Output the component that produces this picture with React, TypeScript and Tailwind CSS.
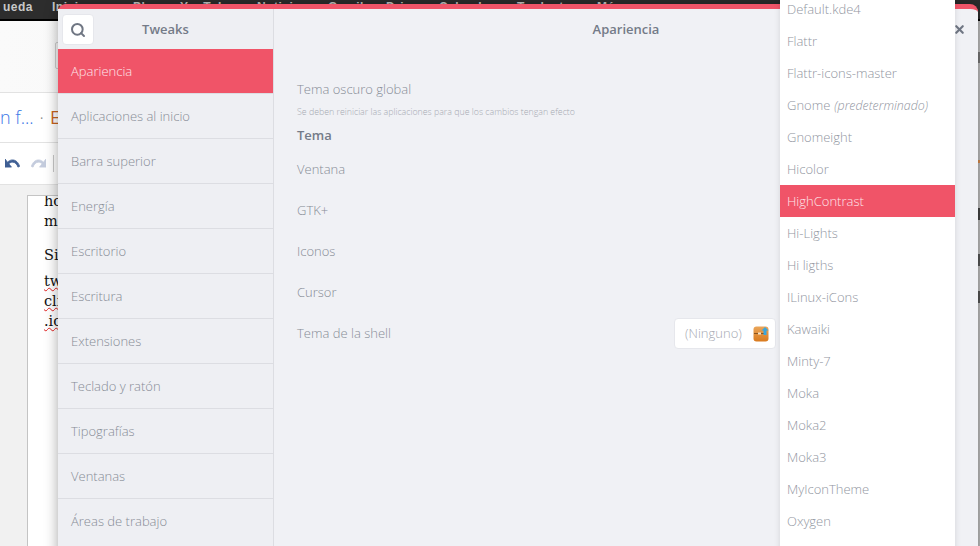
import React from 'react';
import { Search, X } from 'lucide-react';

const sections = [
  'Aplicaciones al inicio',
  'Barra superior',
  'Energía',
  'Escritorio',
  'Escritura',
  'Extensiones',
  'Teclado y ratón',
  'Tipografías',
  'Ventanas',
  'Áreas de trabajo',
];

const topMenu = [
  ['ueda', 3],
  ['Inicio', 52],
  ['Play', 133],
  ['YouTube', 180],
  ['Noticias', 257],
  ['Gmail', 328],
  ['Drive', 386],
  ['Calendar', 439],
  ['Traductor', 517],
  ['Más', 597],
] as const;

const themes = [
  'Default.kde4',
  'Flattr',
  'Flattr-icons-master',
  'Gnome',
  'Gnomeight',
  'Hicolor',
  'HighContrast',
  'Hi-Lights',
  'Hi ligths',
  'ILinux-iCons',
  'Kawaiki',
  'Minty-7',
  'Moka',
  'Moka2',
  'Moka3',
  'MyIconTheme',
  'Oxygen',
];

const rows = ['Ventana', 'GTK+', 'Iconos', 'Cursor'];

const undoPath =
  'M12.5 8c-2.65 0-5.05.99-6.9 2.6L2 7v9h9l-3.62-3.62c1.39-1.16 3.16-1.88 5.12-1.88 3.54 0 6.55 2.31 7.6 5.5l2.37-.78C21.08 11.03 17.15 8 12.5 8z';

function BackgroundPage() {
  return (
    <div className="absolute inset-0 bg-white flex flex-col">
      <div className="h-[21px] shrink-0 bg-[#2d2d2d] border-b-2 border-b-black relative overflow-hidden font-['Liberation_Sans',sans-serif] font-bold text-[12px] tracking-[0.5px] text-[#c8c8c8]">
        {topMenu.map(([t, x]) => (
          <span key={t} className="absolute top-[-2px]" style={{ left: x }}>{t}</span>
        ))}
      </div>
      <div className="h-[72px] shrink-0 bg-gradient-to-r from-[#fafafa] to-[#efefef] border-b border-[#e2e2e2] relative">
        <div className="absolute left-[55px] top-[21px] w-[10px] h-[27px] border border-[#cfcfcf] rounded-[2px]" />
      </div>
      <div className="h-[50px] shrink-0 border-b border-[#e2e2e2] flex items-center font-['Open_Sans',sans-serif] text-[18px] font-light">
        <span className="text-[#3b78e7]">n f...</span>
        <span className="text-[#888] mx-[6px]">·</span>
        <span className="text-[#c8641e] font-normal">E</span>
      </div>
      <div className="h-[42px] shrink-0 flex items-center pl-[5px] border-b border-[#e2e2e2]">
        <svg width="15" height="9" viewBox="2 7 21 10" preserveAspectRatio="none" className="text-[#3f5f94]">
          <path d={undoPath} fill="currentColor" stroke="currentColor" strokeWidth="1" />
        </svg>
        <svg width="15" height="9" viewBox="2 7 21 10" preserveAspectRatio="none" className="text-[#c4ccdd] ml-[11px] -scale-x-100">
          <path d={undoPath} fill="currentColor" stroke="currentColor" strokeWidth="1" />
        </svg>
        <div className="w-px h-[17px] bg-[#c8c8c8] ml-[7px]" />
      </div>
      <div className="flex-1 bg-[#f1f1f1] pl-[27px] pt-[10px] relative">
        <div className="h-[360px] w-[300px] bg-white border border-[#c4c4c4] pl-[16px] overflow-hidden font-['DejaVu_Serif',serif] text-[14.5px] text-[#111] leading-[20px]">
          <p className="-mt-[5px]">ho</p>
          <p>m</p>
          <p className="mt-[14px]">Si</p>
          <p className="mt-[6px] underline decoration-wavy decoration-[#e02020] decoration-1">tw</p>
          <p className="underline decoration-wavy decoration-[#e02020] decoration-1">cli</p>
          <p className="underline decoration-wavy decoration-[#e02020] decoration-1">.ic</p>
        </div>
      </div>
      <div className="absolute left-[978px] top-[21px] bottom-0 w-[2px] bg-[#bdbdbd]">
        <div className="absolute top-[31px] h-[11px] w-full bg-[#777]" />
        <div className="absolute top-[139px] h-[3px] w-full bg-[#d98a4a]" />
        <div className="absolute top-[187px] h-[12px] w-full bg-[#444]" />
        <div className="absolute top-[233px] h-[12px] w-full bg-[#555]" />
        <div className="absolute top-[270px] h-[12px] w-full bg-[#555]" />
      </div>
    </div>
  );
}

function Sidebar() {
  return (
    <aside className="w-[216px] shrink-0 bg-[#eeeff3] border-r border-[#dcdde2] flex flex-col">
      <header className="h-[40px] shrink-0 relative flex items-center justify-center pt-[1px]">
        <button className="absolute left-[4px] top-[5px] w-[32px] h-[31px] bg-white rounded-[4px] border border-[#e6e7ec] flex items-center justify-center text-[#6f7683]">
          <Search size={16} strokeWidth={3} />
        </button>
        <span className="text-[13px] font-semibold text-[#747b88]">Tweaks</span>
      </header>
      <div className="h-[44px] shrink-0 flex items-center pl-[13px] pt-[2px] bg-[#f05468] text-[13px] text-[#fde6ea] font-light">Apariencia</div>
      {sections.map((s) => (
        <div key={s} className="h-[45px] shrink-0 flex items-center pl-[13px] pt-[2px] border-t border-[#dcdde2] text-[13px] text-[#878c96] font-light">
          {s}
        </div>
      ))}
    </aside>
  );
}

function ThemeDropdown() {
  return (
    <div className="absolute left-[722px] top-[-16px] w-[175px] h-[570px] bg-white shadow-[0_0_6px_rgba(0,0,0,0.12)] text-[13px] text-[#92969f] font-light">
      {themes.map((t) => (
        <div
          key={t}
          className={`h-[32px] flex items-center pl-[7px] pt-[2px] ${t === 'HighContrast' ? 'bg-[#f05468] text-[#fde6ea]' : ''}`}
        >
          {t}
          {t === 'Gnome' && <em className="ml-[4px] text-[12.4px]">(predeterminado)</em>}
        </div>
      ))}
    </div>
  );
}

export default function App() {
  return (
    <div className="relative w-[980px] h-[546px] overflow-hidden font-['Open_Sans',sans-serif]">
      <BackgroundPage />

      {/* ventana de Tweaks */}
      <div className="absolute left-[58px] top-[4px] w-[920px] h-[560px] bg-[#f0f1f5] rounded-t-[8px] border-t-[5px] border-t-[#f05468] shadow-[0_0_14px_rgba(0,0,0,0.35)] flex">
        <Sidebar />
        <main className="flex-1 relative">
          <header className="h-[40px] flex items-center justify-center pt-[1px] text-[13px] font-semibold text-[#747b88]">
            Apariencia
          </header>
          <button className="absolute right-[12px] top-[14px] text-[#6f7683]">
            <X size={13} strokeWidth={4} />
          </button>

          <div className="pl-[23px] pr-[202px] pt-[31px]">
            <p className="text-[13px] leading-[18px] text-[#878c96] font-light">Tema oscuro global</p>
            <p className="mt-[8px] text-[8.8px] leading-[12px] text-[#a6a9b2] font-light">
              Se deben reiniciar las aplicaciones para que los cambios tengan efecto
            </p>
            <p className="mt-[8px] text-[13px] leading-[18px] font-semibold text-[#747b88]">Tema</p>
            <div className="mt-[5px]">
              {rows.map((r) => (
                <div key={r} className="h-[41px] flex items-center text-[13px] text-[#878c96] font-light">
                  {r}
                </div>
              ))}
              <div className="h-[41px] flex items-center justify-between text-[13px] text-[#878c96] font-light">
                Tema de la shell
                <div className="w-[102px] h-[31px] bg-white rounded-[4px] border border-[#e6e7ec] flex items-center justify-between pl-[10px] pr-[6px] text-[#a6a9b2]">
                  (Ninguno)
                  <svg width="16" height="16" viewBox="0 0 16 16">
                    <defs>
                      <linearGradient id="shellIcon" x1="0" y1="0" x2="0" y2="1">
                        <stop offset="0" stopColor="#eaa65a" />
                        <stop offset="1" stopColor="#d97a1e" />
                      </linearGradient>
                    </defs>
                    <rect x="0.5" y="0.5" width="15" height="15" rx="3" fill="url(#shellIcon)" />
                    <path d="M1 7.5h11" stroke="#8a5520" strokeWidth="1" />
                    <rect x="5" y="6.5" width="3" height="2" fill="#f4e2c8" />
                    <path d="M12 1 L15.5 4.5 H13.5 V9 H10.5 V4.5 H8.5 Z" fill="#3aa6dd" />
                  </svg>
                </div>
              </div>
            </div>
          </div>
        </main>
        <ThemeDropdown />
      </div>
    </div>
  );
}
